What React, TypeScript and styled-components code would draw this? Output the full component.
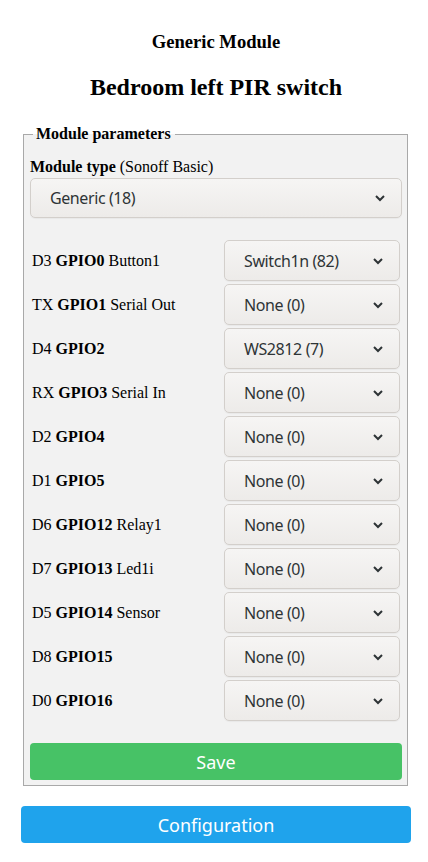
import styled, { createGlobalStyle } from "styled-components"

const GlobalStyle = createGlobalStyle`
  body {
    margin: 0;
    background: #fff;
    color: #000;
    font-family: "Liberation Serif", "Times New Roman", serif;
  }
`

export const Container = styled.div`
  width: 390px;
  padding: 31px 0 19px 21px;
`

export const DeviceName = styled.h3`
  margin: 0;
  font-size: 18.6px;
  line-height: 22px;
  font-weight: bold;
  text-align: center;
`

export const FriendlyName = styled.h2`
  margin: 20px 0 0;
  font-size: 24px;
  line-height: 28px;
  font-weight: bold;
  text-align: center;
`

export const Fieldset = styled.fieldset`
  margin: 24px 3px 0 2px;
  padding: 0 5px 5px 6px;
  background: #f2f2f2;
  border: 1px solid #a9a9a9;
  min-width: 0;
`

export const Legend = styled.legend`
  padding: 0 4px 0 3px;
  margin-left: 3px;
  font-size: 16px;
  line-height: 18px;
  font-weight: bold;
`

export const TypeLabel = styled.p`
  margin: 15px 0 2px;
  font-size: 16px;
  line-height: 18px;
`

export const Select = styled.div<{ $wide?: boolean }>`
  display: flex;
  align-items: center;
  justify-content: space-between;
  box-sizing: border-box;
  height: ${(p) => (p.$wide ? "40px" : "41px")};
  padding: 0 15px 0 19px;
  border: 1px solid #d3cfcb;
  border-radius: 5px;
  background: linear-gradient(#f6f5f4, #edebe9);
  box-shadow: 0 1px 1px rgba(0, 0, 0, 0.04);
  color: #2e3436;
  font-family: "Noto Sans", "Open Sans", sans-serif;
  font-size: 16px;
  letter-spacing: -0.4px;
`

export const Chevron = () => (
  <svg width="12" height="8" viewBox="0 0 12 8">
    <path d="M2 2 L6 6 L10 2" fill="none" stroke="#2e3436" strokeWidth="2" />
  </svg>
)

export const GpioTable = styled.div`
  display: flex;
  flex-direction: column;
  gap: 3px;
  margin-top: 22px;
  padding: 0 2px;
`

export const GpioRow = styled.div`
  display: grid;
  grid-template-columns: 1fr 176px;
  align-items: center;
  font-size: 16px;
  line-height: 18px;
`

export const Button = styled.button<{ $bg: string }>`
  display: block;
  width: 100%;
  height: 37px;
  border: 0;
  border-radius: 4px;
  background: ${(p) => p.$bg};
  color: #fff;
  font-family: "Noto Sans", "Open Sans", sans-serif;
  font-size: 18px;
  cursor: pointer;
`

export const SaveWrap = styled.div`
  margin-top: 22px;
`

export const ConfigWrap = styled.div`
  margin-top: 20px;
`

interface IGpio {
  pin: string
  gpio: string
  func: string
  value: string
}

const gpios: IGpio[] = [
  { pin: "D3", gpio: "GPIO0", func: "Button1", value: "Switch1n (82)" },
  { pin: "TX", gpio: "GPIO1", func: "Serial Out", value: "None (0)" },
  { pin: "D4", gpio: "GPIO2", func: "", value: "WS2812 (7)" },
  { pin: "RX", gpio: "GPIO3", func: "Serial In", value: "None (0)" },
  { pin: "D2", gpio: "GPIO4", func: "", value: "None (0)" },
  { pin: "D1", gpio: "GPIO5", func: "", value: "None (0)" },
  { pin: "D6", gpio: "GPIO12", func: "Relay1", value: "None (0)" },
  { pin: "D7", gpio: "GPIO13", func: "Led1i", value: "None (0)" },
  { pin: "D5", gpio: "GPIO14", func: "Sensor", value: "None (0)" },
  { pin: "D8", gpio: "GPIO15", func: "", value: "None (0)" },
  { pin: "D0", gpio: "GPIO16", func: "", value: "None (0)" },
]

function App() {
  return (
    <>
      <GlobalStyle />
      <Container>
        <DeviceName>Generic Module</DeviceName>
        <FriendlyName>Bedroom left PIR switch</FriendlyName>
        <Fieldset>
          <Legend>Module parameters</Legend>
          <TypeLabel>
            <b>Module type</b> (Sonoff Basic)
          </TypeLabel>
          <Select $wide>
            Generic (18)
            <Chevron />
          </Select>
          <GpioTable>
            {gpios.map((g) => (
              <GpioRow key={g.gpio}>
                <span>
                  {g.pin} <b>{g.gpio}</b> {g.func}
                </span>
                <Select>
                  {g.value}
                  <Chevron />
                </Select>
              </GpioRow>
            ))}
          </GpioTable>
          <SaveWrap>
            <Button $bg="#47c266">Save</Button>
          </SaveWrap>
        </Fieldset>
        <ConfigWrap>
          <Button $bg="#1fa3ec">Configuration</Button>
        </ConfigWrap>
      </Container>
    </>
  )
}

export default App
